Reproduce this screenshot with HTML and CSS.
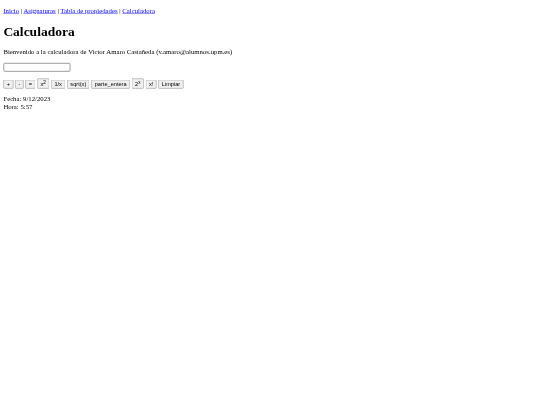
FILE: index.html
```html
<!DOCTYPE html>
<html lang="es">
<head>
<meta charset="utf-8">
<title>Calculadora</title>
<link rel="stylesheet" href="styles.css">
</head>
<body>
<div class="page">
<nav><a href="#">Inicio</a> | <a href="#">Asignaturas</a> | <a href="#">Tabla de propiedades</a> | <a href="#">Calculadora</a></nav>
<h1>Calculadora</h1>
<p class="welcome">Bienvenido a la calculadora de Victor Amaro Castañeda (v.amaro@alumnos.upm.es)</p>
<input type="text" class="display">
<p class="keys">
<button>+</button>
<button>-</button>
<button>=</button>
<button>x<sup>2</sup></button>
<button>1/x</button>
<button>sqrt(x)</button>
<button>parte_entera</button>
<button>2<sup>x</sup></button>
<button>x!</button>
<button>Limpiar</button>
</p>
<div>Fecha: 9/12/2023<br>Hora: 5:57</div>
</div>
</body>
</html>
```
FILE: styles.css
```css
html, body {
  margin: 0;
  background: #fff;
}
body {
  overflow: hidden;
}
.page {
  padding: 17px 0 0 8px;
  transform: scale(0.421875);
  transform-origin: 0 0;
  filter: blur(0.5px);
  font-family: "Liberation Serif", "Times New Roman", serif;
  font-size: 16px;
  color: #000;
}
.welcome {
  white-space: nowrap;
}
a {
  color: #0000ee;
}
.display {
  width: 151px;
  border: 2px solid #8a8a8a;
  border-radius: 3px;
  padding: 1px 2px;
  font-family: "Liberation Sans", Arial, sans-serif;
}
button {
  font-family: "Liberation Sans", Arial, sans-serif;
}
```
